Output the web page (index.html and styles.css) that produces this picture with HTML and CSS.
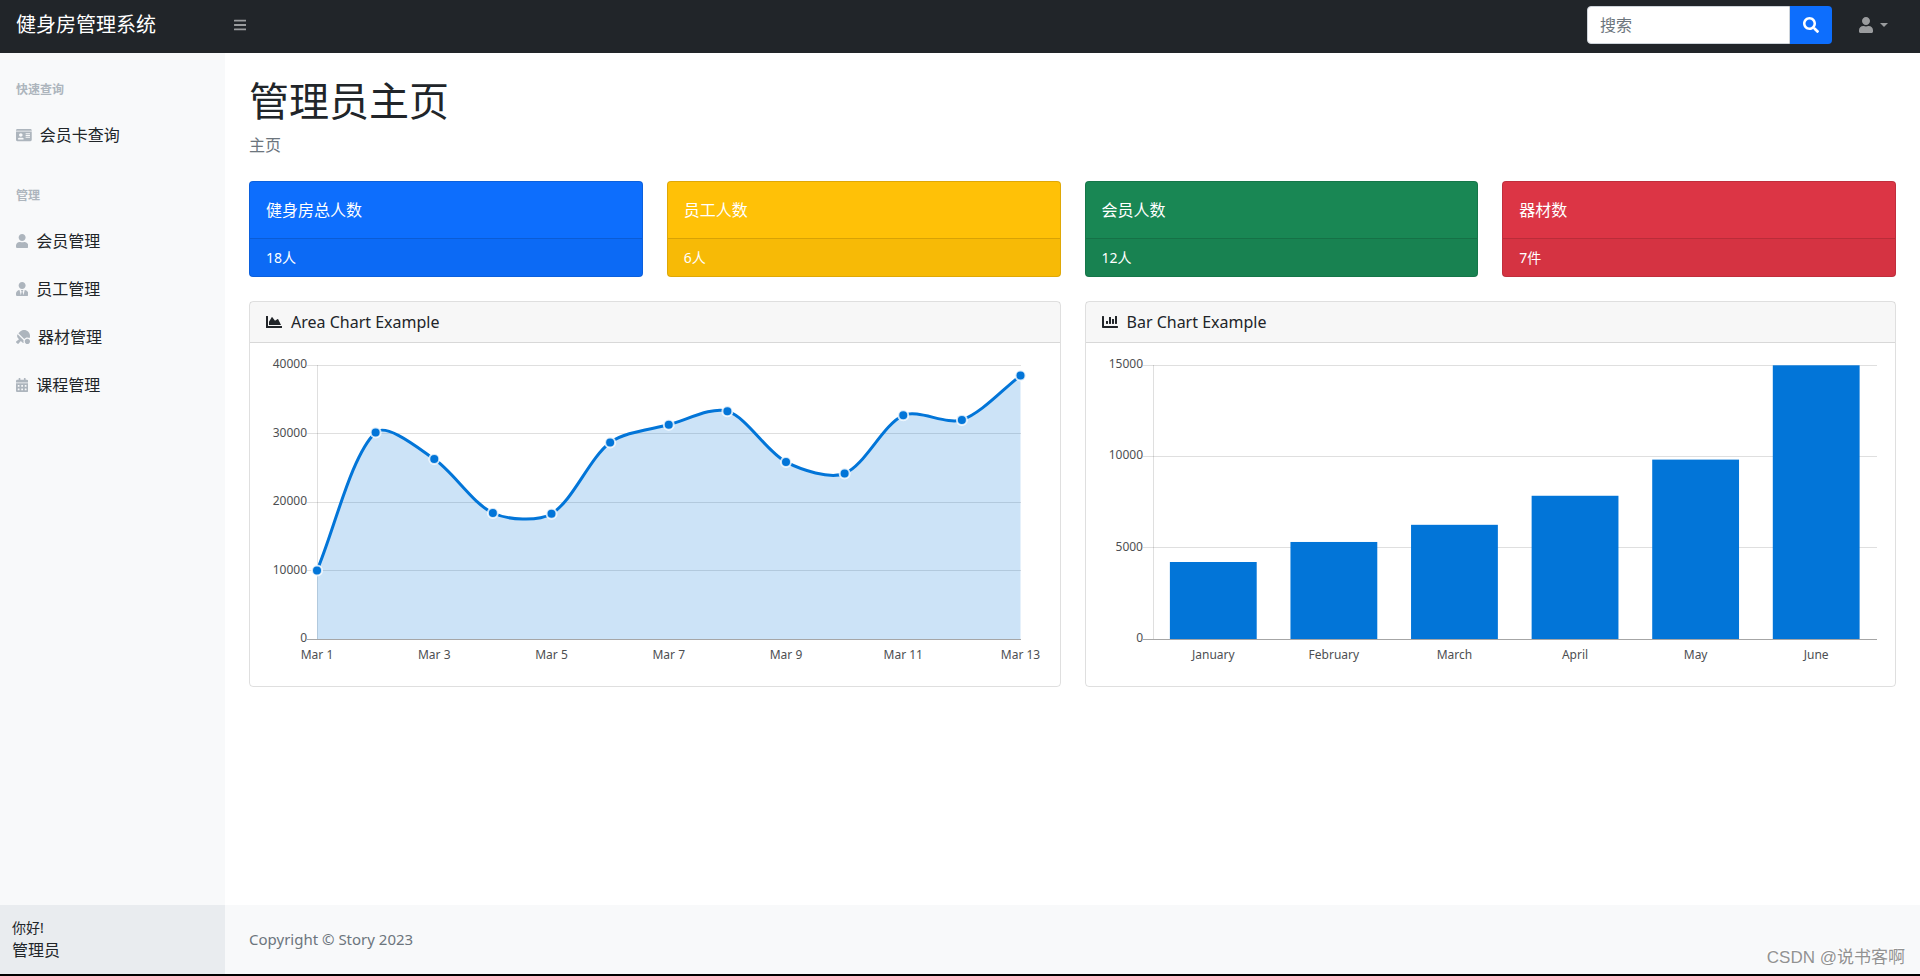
FILE: index.html
```html
<!DOCTYPE html>
<html lang="zh-CN">
<head>
<meta charset="utf-8">
<meta name="viewport" content="width=device-width, initial-scale=1">
<title>健身房管理系统</title>
<link rel="stylesheet" href="styles.css">
</head>
<body class="page">
<header class="topnav">
  <a class="brand" href="#">健身房管理系统</a>
  <button class="menu-toggle" type="button" aria-label="菜单">
    <svg class="icon icon-sm" viewBox="0 0 448 512"><path d="M16 132h416c8.837 0 16-7.163 16-16V76c0-8.837-7.163-16-16-16H16C7.163 60 0 67.163 0 76v40c0 8.837 7.163 16 16 16zm0 160h416c8.837 0 16-7.163 16-16v-40c0-8.837-7.163-16-16-16H16c-8.837 0-16 7.163-16 16v40c0 8.837 7.163 16 16 16zm0 160h416c8.837 0 16-7.163 16-16v-40c0-8.837-7.163-16-16-16H16c-8.837 0-16 7.163-16 16v40c0 8.837 7.163 16 16 16z"/></svg>
  </button>
  <form class="search">
    <input class="search-input" type="text" placeholder="搜索" aria-label="搜索">
    <button class="search-button" type="button" aria-label="搜索">
      <svg class="icon icon-md" viewBox="0 0 512 512"><path d="M505 442.7L405.3 343c-4.5-4.5-10.6-7-17-7H372c27.6-35.3 44-79.7 44-128C416 93.1 322.9 0 208 0S0 93.1 0 208s93.1 208 208 208c48.3 0 92.7-16.4 128-44v16.3c0 6.4 2.5 12.5 7 17l99.7 99.7c9.4 9.4 24.6 9.4 33.9 0l28.3-28.3c9.4-9.4 9.4-24.6.1-34zM208 336c-70.7 0-128-57.2-128-128 0-70.7 57.2-128 128-128 70.7 0 128 57.2 128 128 0 70.7-57.2 128-128 128z"/></svg>
    </button>
  </form>
  <button class="user-menu" type="button" aria-label="用户">
    <svg class="icon icon-md" viewBox="0 0 448 512"><path d="M224 256c70.7 0 128-57.3 128-128S294.7 0 224 0 96 57.3 96 128s57.3 128 128 128zm89.6 32h-16.7c-22.2 10.2-46.9 16-72.9 16s-50.6-5.8-72.9-16h-16.7C60.2 288 0 348.2 0 422.4V464c0 26.5 21.5 48 48 48h352c26.5 0 48-21.5 48-48v-41.6c0-74.2-60.2-134.4-134.4-134.4z"/></svg>
    <span class="caret"></span>
  </button>
</header>

<div class="layout">
  <aside class="sidebar">
    <nav class="sidebar-nav">
      <h2 class="sidebar-heading">快速查询</h2>
      <a class="nav-link" href="#">
        <svg class="icon" viewBox="0 0 576 512"><path d="M528 32H48C21.5 32 0 53.5 0 80v16h576V80c0-26.5-21.5-48-48-48zM0 432c0 26.5 21.5 48 48 48h480c26.5 0 48-21.5 48-48V128H0v304zm352-232c0-4.400 3.600-8 8-8h144c4.400 0 8 3.600 8 8v16c0 4.400-3.600 8-8 8H360c-4.400 0-8-3.600-8-8v-16zm0 64c0-4.400 3.600-8 8-8h144c4.400 0 8 3.600 8 8v16c0 4.400-3.600 8-8 8H360c-4.400 0-8-3.600-8-8v-16zm0 64c0-4.400 3.600-8 8-8h144c4.400 0 8 3.600 8 8v16c0 4.400-3.600 8-8 8H360c-4.400 0-8-3.600-8-8v-16zM176 192c35.300 0 64 28.700 64 64s-28.700 64-64 64-64-28.700-64-64 28.700-64 64-64zM67.100 396.200C75.500 370.500 99.600 352 128 352h8.200c12.300 5.100 25.700 8 39.800 8s27.600-2.900 39.800-8h8.200c28.400 0 52.500 18.500 60.900 44.200 3.200 9.900-5.200 19.800-15.600 19.800H82.700c-10.400 0-18.800-10-15.600-19.800z"/></svg>
        会员卡查询</a>
      <h2 class="sidebar-heading">管理</h2>
      <a class="nav-link" href="#">
        <svg class="icon" viewBox="0 0 448 512"><path d="M224 256c70.7 0 128-57.3 128-128S294.7 0 224 0 96 57.3 96 128s57.3 128 128 128zm89.6 32h-16.7c-22.2 10.2-46.9 16-72.9 16s-50.6-5.8-72.9-16h-16.7C60.2 288 0 348.2 0 422.4V464c0 26.5 21.5 48 48 48h352c26.5 0 48-21.5 48-48v-41.6c0-74.2-60.2-134.4-134.4-134.4z"/></svg>
        会员管理</a>
      <a class="nav-link" href="#">
        <svg class="icon" viewBox="0 0 448 512"><path d="M224 256c70.7 0 128-57.3 128-128S294.7 0 224 0 96 57.3 96 128s57.3 128 128 128zm95.8 32.600L272 480l-32-136 32-56h-96l32 56-32 136-47.800-191.400C56.900 292 0 350.300 0 422.400V464c0 26.500 21.500 48 48 48h352c26.500 0 48-21.500 48-48v-41.600c0-72.100-56.900-130.400-128.200-133.800z"/></svg>
        员工管理</a>
      <a class="nav-link" href="#">
        <svg class="icon" viewBox="0 0 512 512"><path d="M496.200 296.500C527.700 218.700 512 126.200 449 63.100 365.100-21 229-21 145.100 63.100l-56 56.100 211.500 211.500c46.100-62.100 131.500-77.400 195.600-34.200zm-217.900 79.700L57.900 155.900c-27.300 45.300-21.700 105 17.300 144.100l34.500 34.600L6.700 424c-8.600 7.500-9.100 20.700-1 28.800l53.400 53.500c8 8.100 21.200 7.600 28.700-1L177.100 402l35.700 35.700c19.700 19.700 44.600 30.500 70.300 33.300-7.100-17-11-35.600-11-55.100-.1-13.800 2.500-27 6.200-39.700zM416 320c-53 0-96 43-96 96s43 96 96 96 96-43 96-96-43-96-96-96z"/></svg>
        器材管理</a>
      <a class="nav-link" href="#">
        <svg class="icon" viewBox="0 0 448 512"><path fill-rule="evenodd" d="M0 464c0 26.500 21.500 48 48 48h352c26.500 0 48-21.500 48-48V192H0zM64 268q0-12 12-12h40q12 0 12 12v40q0 12-12 12H76q-12 0-12-12zM192 268q0-12 12-12h40q12 0 12 12v40q0 12-12 12h-40q-12 0-12-12zM320 268q0-12 12-12h40q12 0 12 12v40q0 12-12 12h-40q-12 0-12-12zM64 396q0-12 12-12h40q12 0 12 12v40q0 12-12 12H76q-12 0-12-12zM192 396q0-12 12-12h40q12 0 12 12v40q0 12-12 12h-40q-12 0-12-12zM320 396q0-12 12-12h40q12 0 12 12v40q0 12-12 12h-40q-12 0-12-12zM400 64h-48V16c0-8.800-7.200-16-16-16h-32c-8.800 0-16 7.200-16 16v48H160V16c0-8.800-7.200-16-16-16h-32c-8.800 0-16 7.200-16 16v48H48C21.500 64 0 85.500 0 112v48h448v-48c0-26.500-21.500-48-48-48z"/></svg>
        课程管理</a>
    </nav>
    <div class="sidebar-footer">
      <div class="greeting">你好!</div>
      <div>管理员</div>
    </div>
  </aside>

  <div class="content">
    <main class="main">
      <h1 class="title">管理员主页</h1>
      <nav class="breadcrumb" aria-label="面包屑">主页</nav>
      <section class="stats">
        <article class="stat stat-blue"><div class="stat-name">健身房总人数</div><div class="stat-value">18人</div></article>
        <article class="stat stat-yellow"><div class="stat-name">员工人数</div><div class="stat-value">6人</div></article>
        <article class="stat stat-green"><div class="stat-name">会员人数</div><div class="stat-value">12人</div></article>
        <article class="stat stat-red"><div class="stat-name">器材数</div><div class="stat-value">7件</div></article>
      </section>
      <section class="charts">
        <article class="panel">
          <h2 class="panel-header">
            <svg class="icon icon-md" viewBox="0 0 512 512"><path d="M500 384c6.6 0 12 5.400 12 12v40c0 6.600-5.400 12-12 12H12c-6.600 0-12-5.400-12-12V76c0-6.600 5.400-12 12-12h40c6.600 0 12 5.400 12 12v308h436zM372.700 159.500L288 216l-85.300-113.700c-5.100-6.800-15.500-6.300-19.900 1L96 248v104h384l-89.900-187.800c-3.200-6.500-11.400-8.700-17.400-4.700z"/></svg>
            Area Chart Example</h2>
          <div class="panel-body"><svg class="chart" id="area-chart" role="img" aria-label="Area Chart Example"></svg></div>
        </article>
        <article class="panel">
          <h2 class="panel-header">
            <svg class="icon icon-md" viewBox="0 0 512 512"><path d="M332.800 320h38.400c6.400 0 12.800-6.400 12.800-12.800V172.800c0-6.400-6.400-12.800-12.800-12.800h-38.400c-6.400 0-12.800 6.400-12.800 12.800v134.400c0 6.400 6.400 12.800 12.800 12.800zm96 0h38.400c6.400 0 12.800-6.400 12.800-12.800V76.800c0-6.400-6.400-12.800-12.800-12.800h-38.400c-6.400 0-12.800 6.400-12.800 12.800v230.400c0 6.400 6.400 12.800 12.800 12.800zm-288 0h38.400c6.400 0 12.800-6.400 12.800-12.800v-70.400c0-6.400-6.400-12.800-12.800-12.800h-38.400c-6.400 0-12.800 6.400-12.800 12.800v70.400c0 6.400 6.400 12.800 12.800 12.800zm96 0h38.400c6.400 0 12.800-6.400 12.800-12.800V108.800c0-6.400-6.400-12.800-12.800-12.800h-38.400c-6.400 0-12.800 6.400-12.800 12.800v198.400c0 6.400 6.400 12.800 12.800 12.800zM496 384H64V80c0-8.840-7.160-16-16-16H16C7.160 64 0 71.160 0 80v336c0 17.670 14.330 32 32 32h464c8.840 0 16-7.160 16-16v-32c0-8.840-7.160-16-16-16z"/></svg>
            Bar Chart Example</h2>
          <div class="panel-body"><svg class="chart" id="bar-chart" role="img" aria-label="Bar Chart Example"></svg></div>
        </article>
      </section>
    </main>
    <footer class="footer">Copyright © Story 2023</footer>
  </div>
</div>
<div class="watermark">CSDN @说书客啊</div>
<script src="charts.js"></script>
</body>
</html>
```

FILE: styles.css
```css
*,
*::before,
*::after {
  box-sizing: border-box;
}

.page {
  display: flex;
  flex-direction: column;
  min-height: 100vh;
  margin: 0;
  border-bottom: 2px solid #000;
  background: #fff;
  color: #212529;
  font-family: "Noto Sans", "Noto Sans CJK SC", sans-serif;
  font-size: 16px;
  line-height: 24px;
}

.icon {
  flex: none;
  display: block;
  height: 14px;
  fill: currentColor;
}

.icon-md {
  height: 16px;
}

/* Top bar */
.topnav {
  display: flex;
  align-items: center;
  height: 53px;
  padding: 0 24px 3px 0;
  background: #212529;
}

.brand {
  width: 226px;
  padding-left: 16px;
  color: #fff;
  font-size: 20px;
  line-height: 30px;
  text-decoration: none;
}

.menu-toggle,
.user-menu {
  display: flex;
  align-items: center;
  padding: 8px;
  border: 0;
  background: transparent;
  color: rgba(255, 255, 255, 0.55);
}

.search {
  display: flex;
  width: 245px;
  margin: 0 19px 0 auto;
}

.search-input {
  flex: 1;
  min-width: 0;
  height: 38px;
  padding: 6px 12px;
  border: 1px solid #ced4da;
  border-radius: 4px 0 0 4px;
  background: #fff;
  color: #212529;
  font: inherit;
}

.search-input::placeholder {
  color: #6c757d;
  opacity: 1;
}

.search-button {
  display: flex;
  align-items: center;
  justify-content: center;
  width: 42px;
  padding: 0;
  border: 0;
  border-radius: 0 4px 4px 0;
  background: #0d6efd;
  color: #fff;
}

.user-menu {
  gap: 7px;
}

.caret {
  border-top: 4px solid;
  border-right: 4px solid transparent;
  border-left: 4px solid transparent;
}

/* Sidebar */
.layout {
  display: flex;
  flex: 1;
}

.sidebar {
  display: flex;
  flex: none;
  flex-direction: column;
  width: 225px;
  background: #f8f9fa;
}

.sidebar-nav {
  flex: 1;
}

.sidebar-heading {
  margin: 0;
  padding: 28px 16px 12px;
  color: #adb5bd;
  font-size: 12px;
  font-weight: 700;
  line-height: 18px;
}

.nav-link {
  display: flex;
  align-items: center;
  gap: 8px;
  padding: 12px 16px;
  color: #212529;
  text-decoration: none;
}

.nav-link .icon {
  color: #adb5bd;
}

.sidebar-footer {
  padding: 12px;
  background: #e9ecef;
}

.greeting {
  font-size: 14px;
  line-height: 21px;
}

/* Content */
.content {
  display: flex;
  flex: 1;
  flex-direction: column;
  min-width: 0;
}

.main {
  flex: 1;
  padding: 24px 24px 0;
}

.title {
  margin: 0 0 8px;
  font-size: 40px;
  font-weight: 400;
  line-height: 48px;
}

.breadcrumb {
  margin-bottom: 24px;
  color: #6c757d;
}

.stats,
.charts {
  display: grid;
  gap: 24px;
  margin-bottom: 24px;
}

.stats {
  grid-template-columns: repeat(4, minmax(0, 1fr));
}

.charts {
  grid-template-columns: repeat(2, minmax(0, 1fr));
}

.stat,
.panel {
  border: 1px solid rgba(0, 0, 0, 0.125);
  border-radius: 4px;
}

.stat {
  color: #fff;
}

.stat-blue {
  background-color: #0d6efd;
}

.stat-yellow {
  background-color: #ffc107;
}

.stat-green {
  background-color: #198754;
}

.stat-red {
  background-color: #dc3545;
}

.stat-name {
  padding: 16px;
}

.stat-value {
  padding: 8px 16px;
  border-top: 1px solid rgba(0, 0, 0, 0.125);
  background: rgba(0, 0, 0, 0.03);
  font-size: 14px;
  line-height: 21px;
}

.panel-header {
  display: flex;
  align-items: center;
  gap: 9px;
  margin: 0;
  padding: 8px 16px;
  border-bottom: 1px solid rgba(0, 0, 0, 0.125);
  background: rgba(0, 0, 0, 0.03);
  font-size: 16px;
  font-weight: 400;
}

.panel-body {
  padding: 16px;
}

.chart {
  display: block;
  width: 100%;
  aspect-ratio: 5 / 2;
  overflow: visible;
}

.grid-line {
  stroke: rgba(0, 0, 0, 0.125);
  shape-rendering: crispEdges;
}

.zero-line {
  stroke: rgba(0, 0, 0, 0.35);
  shape-rendering: crispEdges;
}

.chart-label {
  fill: #4d4f52;
  font-size: 12px;
}

.bar {
  fill: #0275d8;
}

.area {
  fill: rgba(2, 117, 216, 0.2);
}

.curve {
  fill: none;
  stroke: #0275d8;
  stroke-width: 3;
}

.point {
  fill: #0275d8;
  stroke: rgba(255, 255, 255, 0.8);
  stroke-width: 2;
}

.footer {
  padding: 24px;
  background: #f8f9fa;
  color: #6c757d;
  font-size: 15px;
  line-height: 21px;
}

.watermark {
  position: absolute;
  right: 15px;
  bottom: 6px;
  color: #929292;
  font-family: "Liberation Sans", "Noto Sans CJK SC", sans-serif;
  font-size: 17px;
  text-shadow: -1px -1px 0 #fff;
}
```

FILE: charts.js
```js
const SVG_NS = "http://www.w3.org/2000/svg";
const TENSION = 0.3;

const areaData = {
  labels: ["Mar 1", "", "Mar 3", "", "Mar 5", "", "Mar 7", "", "Mar 9", "", "Mar 11", "", "Mar 13"],
  values: [10000, 30162, 26263, 18394, 18287, 28682, 31274, 33259, 25849, 24159, 32651, 31984, 38451],
  max: 40000,
  step: 10000
};
const barData = {
  labels: ["January", "February", "March", "April", "May", "June"],
  values: [4215, 5312, 6251, 7841, 9821, 14984],
  max: 15000,
  step: 5000
};

function add(svg, tag, attributes, text) {
  const node = document.createElementNS(SVG_NS, tag);
  Object.entries(attributes).forEach(([key, value]) => node.setAttribute(key, value));
  if (text !== undefined) node.textContent = text;
  svg.appendChild(node);
}

function line(svg, name, x1, y1, x2, y2) {
  add(svg, "line", { class: name, x1, y1, x2, y2 });
}

function label(svg, x, y, anchor, text) {
  add(svg, "text", { class: "chart-label", x, y, "text-anchor": anchor }, text);
}

// Draws the axes and returns the plot box with its value scale.
function drawAxes(svg, data, rightPadding) {
  svg.replaceChildren();
  const { width, height } = svg.getBoundingClientRect();
  const box = { left: 51, right: width - rightPadding, top: 6, bottom: height - 31 };
  box.y = value => box.bottom - (value / data.max) * (box.bottom - box.top);
  for (let value = 0; value <= data.max; value += data.step) {
    const y = box.y(value);
    line(svg, value === 0 ? "zero-line" : "grid-line", box.left - 10, y, box.right, y);
    label(svg, box.left - 10, y + 3, "end", value);
  }
  line(svg, "grid-line", box.left, box.top, box.left, box.bottom);
  return box;
}

function curvePath(points) {
  const handles = points.map((point, i) => {
    const before = points[i - 1] || point;
    const after = points[i + 1] || point;
    const d1 = Math.hypot(point.x - before.x, point.y - before.y);
    const d2 = Math.hypot(after.x - point.x, after.y - point.y);
    const a = (TENSION * d1) / (d1 + d2);
    const b = (TENSION * d2) / (d1 + d2);
    const dx = after.x - before.x;
    const dy = after.y - before.y;
    return { inX: point.x - a * dx, inY: point.y - a * dy, outX: point.x + b * dx, outY: point.y + b * dy };
  });
  return points.map((point, i) => {
    if (i === 0) return `M${point.x} ${point.y}`;
    const from = handles[i - 1];
    const to = handles[i];
    return `C${from.outX} ${from.outY} ${to.inX} ${to.inY} ${point.x} ${point.y}`;
  }).join("");
}

function drawArea() {
  const svg = document.getElementById("area-chart");
  const box = drawAxes(svg, areaData, 23);
  const gap = (box.right - box.left) / (areaData.values.length - 1);
  const points = areaData.values.map((value, i) => ({ x: box.left + i * gap, y: box.y(value) }));
  const path = curvePath(points);
  add(svg, "path", { class: "area", d: `${path}V${box.bottom}H${box.left}Z` });
  add(svg, "path", { class: "curve", d: path });
  points.forEach(({ x, y }) => add(svg, "circle", { class: "point", cx: x, cy: y, r: 5 }));
  areaData.labels.forEach((text, i) => {
    if (text) label(svg, points[i].x, box.bottom + 20, "middle", text);
  });
}

function drawBars() {
  const svg = document.getElementById("bar-chart");
  const box = drawAxes(svg, barData, 3);
  const slot = (box.right - box.left) / barData.values.length;
  barData.values.forEach((value, i) => {
    const center = box.left + (i + 0.5) * slot;
    const y = box.y(value);
    add(svg, "rect", { class: "bar", x: center - slot * 0.36, y, width: slot * 0.72, height: box.bottom - y });
    label(svg, center, box.bottom + 20, "middle", barData.labels[i]);
  });
}

function draw() {
  drawArea();
  drawBars();
}

draw();
window.addEventListener("resize", draw);
```
